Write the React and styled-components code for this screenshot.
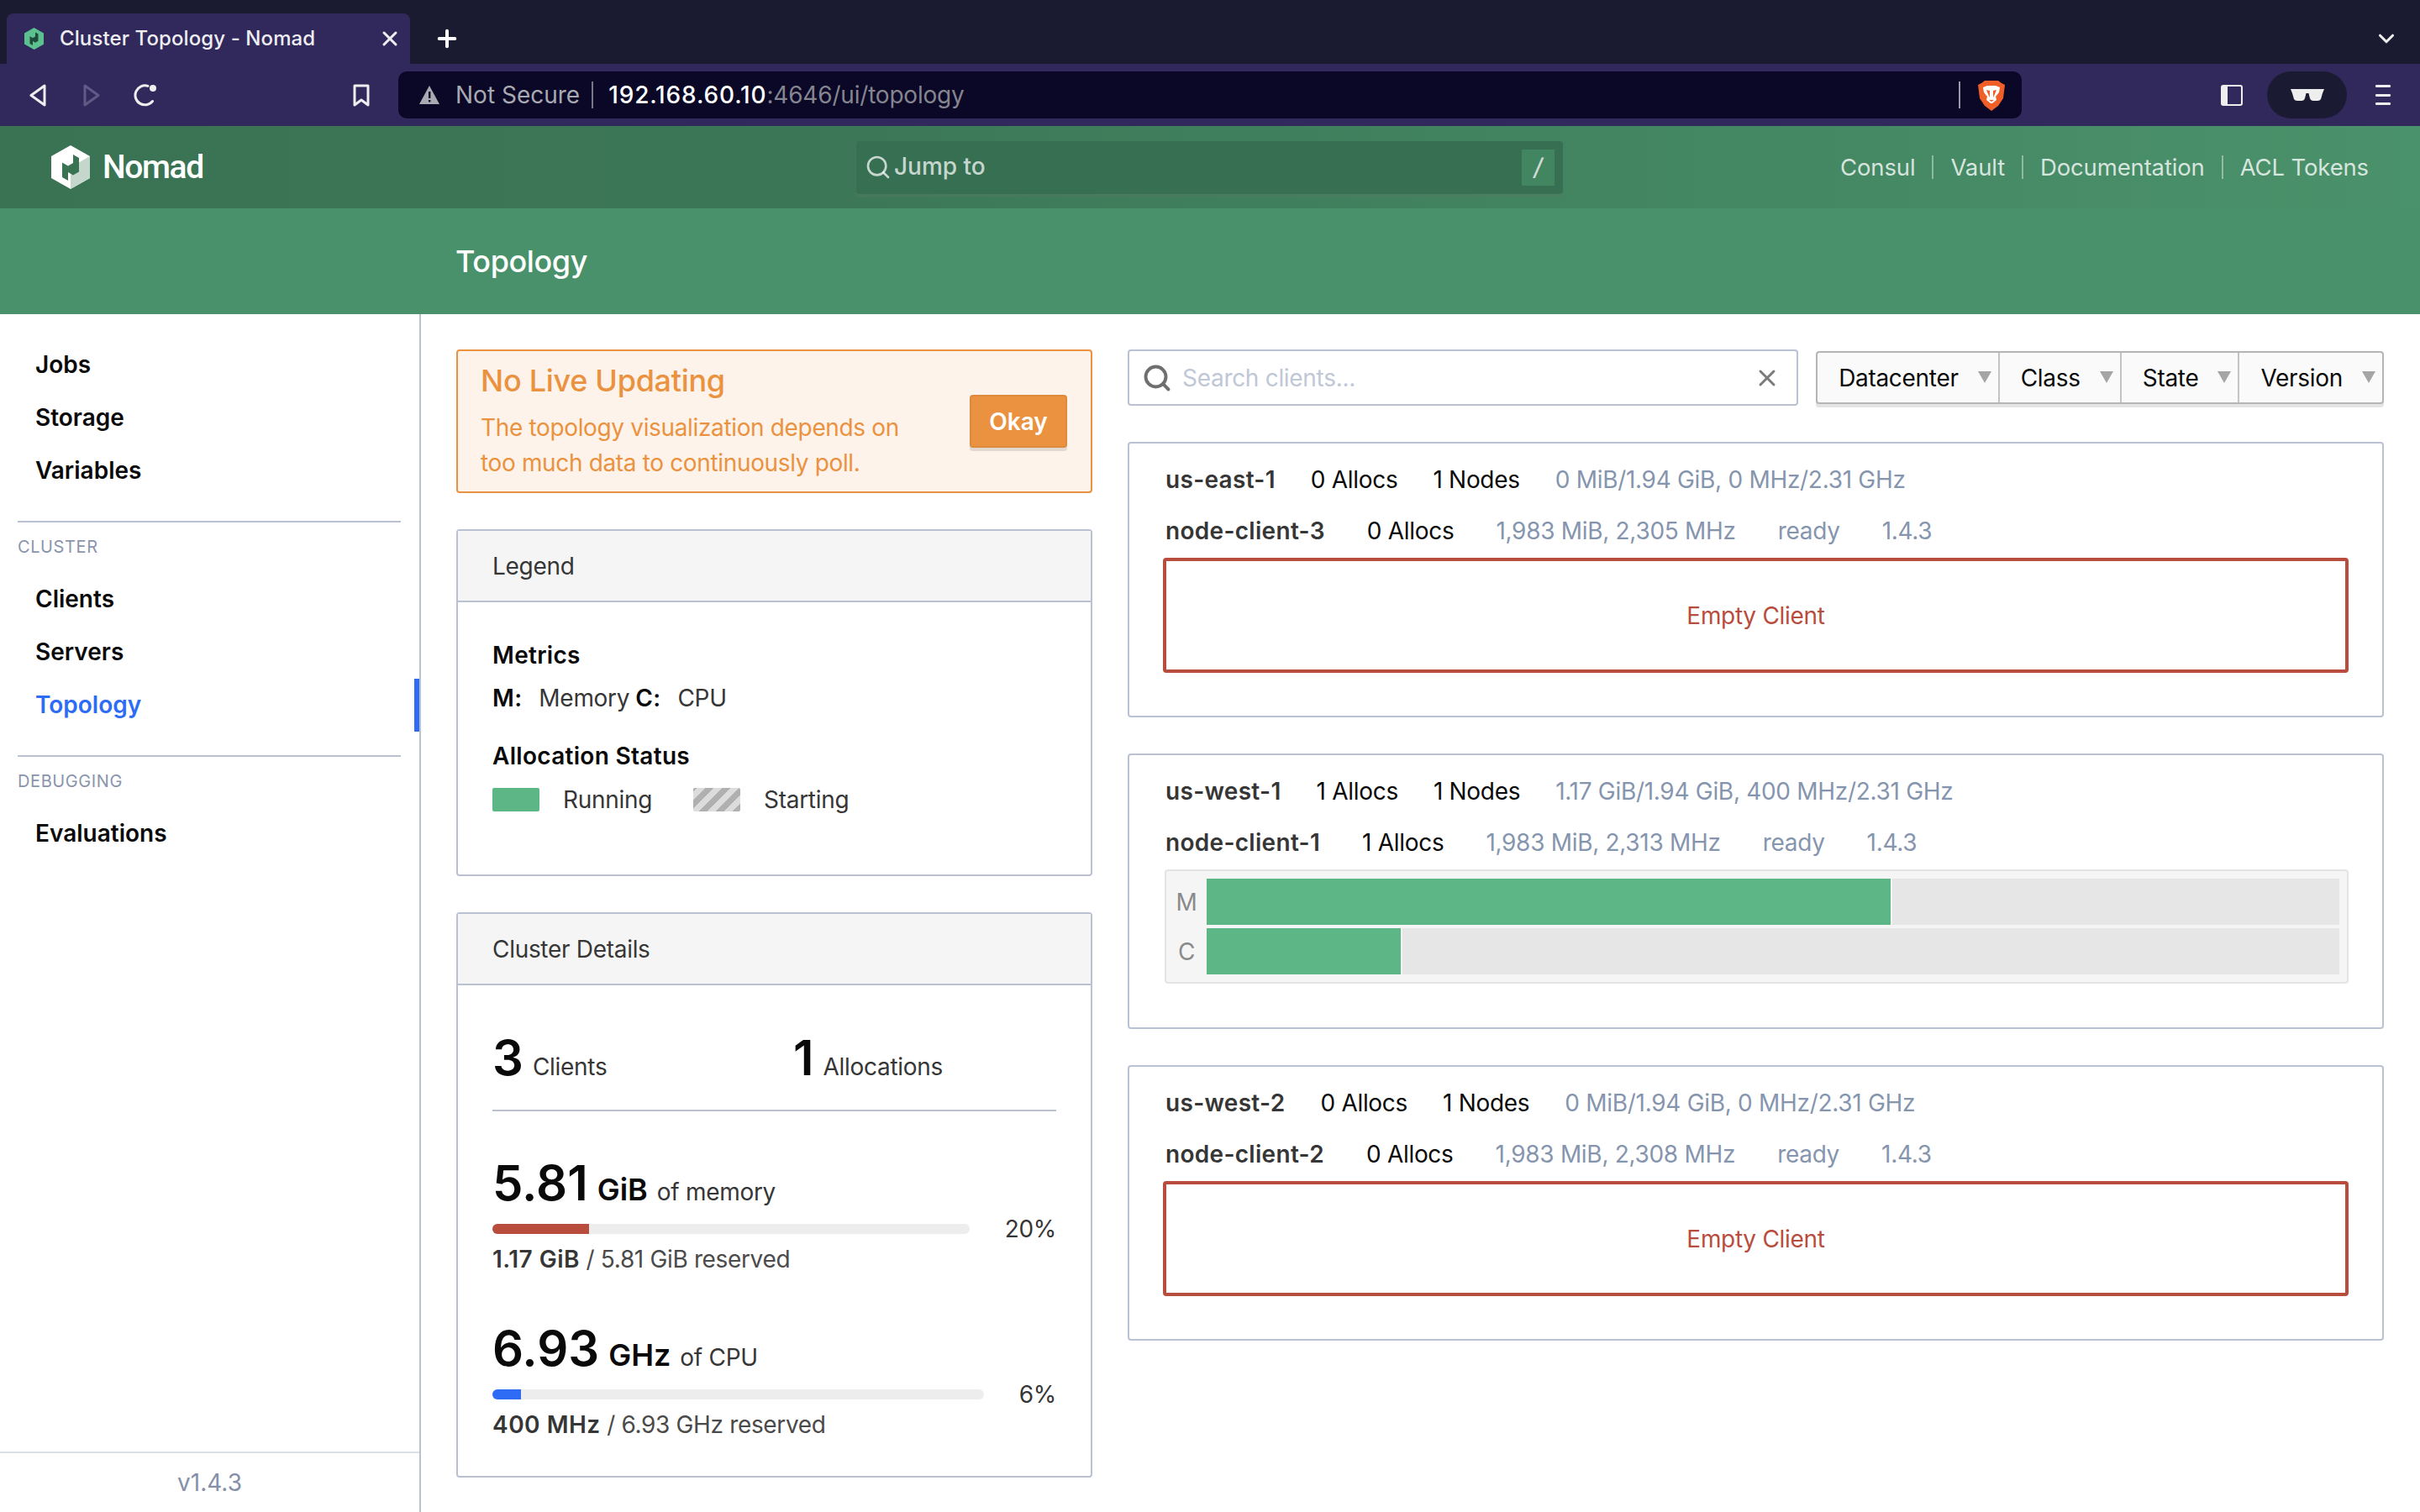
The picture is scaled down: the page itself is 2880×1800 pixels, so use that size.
import React from 'react'
import styled, { createGlobalStyle } from 'styled-components'
import { Search, X, Plus, ChevronDown } from 'lucide-react'

const Global = createGlobalStyle`
html, body { margin: 0; padding: 0; background: #fff; }
body { font-family: Inter, "Liberation Sans", sans-serif; font-size: 28px; line-height: 42px; color: #0a0a0a; letter-spacing: -0.3px; }
* { box-sizing: border-box; }
`

const Page = styled.div`
	width: 2880px;
	height: 1800px;
	overflow: hidden;
	display: flex;
	flex-direction: column;
`

/* browser chrome */
const TabStrip = styled.div`
	height: 76px;
	background: #1a1a30;
	display: flex;
	align-items: flex-end;
	padding: 0 25px 0 8px;
`
const Tab = styled.div`
	width: 480px;
	height: 60px;
	background: #31295c;
	border-radius: 8px 8px 0 0;
	display: flex;
	align-items: center;
	padding: 0 10px 0 21px;
	color: #eeeef2;
	font-size: 24px;
	font-weight: 500;
	letter-spacing: 0.1px;
`
const TabTitle = styled.span`
	margin-left: 19px;
	flex: 1;
`
const NewTab = styled.div`
	margin-left: 28px;
	height: 60px;
	display: flex;
	align-items: center;
	color: #fff;
`
const TabMenu = styled.div`
	margin-left: auto;
	height: 60px;
	display: flex;
	align-items: center;
	color: #eee;
`
const Toolbar = styled.div`
	height: 74px;
	background: #31295c;
	display: flex;
	align-items: center;
`
const NavButtons = styled.div`
	width: 474px;
	display: flex;
	align-items: center;
	padding: 0 34px 0 35px;
`
const NavIcon = styled.div`
	display: flex;
	margin-left: ${p => p.$left || 0}px;
`
const BookmarkSlot = styled.div`
	margin-left: auto;
	display: flex;
`
const UrlBar = styled.div`
	width: 1932px;
	height: 56px;
	background: #0a0727;
	border-radius: 10px;
	display: flex;
	align-items: center;
	padding: 0 20px 0 24px;
	font-size: 28px;
	color: #fff;
	letter-spacing: 0;
`
const NotSecure = styled.span`
	color: #a9a9b2;
	margin-left: 18px;
	padding-right: 14px;
	border-right: 2px solid #77778a;
	line-height: 32px;
`
const Host = styled.span`
	margin-left: 18px;
	font-weight: 500;
	letter-spacing: 0.85px;
`
const UrlRest = styled.span`
	color: #85858f;
	letter-spacing: -0.2px;
`
const UrlEnd = styled.div`
	margin-left: auto;
	display: flex;
	align-items: center;
	gap: 21px;
`
const UrlDivider = styled.div`
	width: 2px;
	height: 32px;
	background: #9a9aa6;
`
const ToolbarRight = styled.div`
	flex: 1;
	display: flex;
	align-items: center;
	padding-left: 237px;
`
const ShieldPill = styled.div`
	margin-left: 29px;
	width: 95px;
	height: 56px;
	border-radius: 28px;
	background: #1b1a33;
	display: flex;
	align-items: center;
	justify-content: center;
`
const MenuBars = styled.div`
	margin-left: 34px;
	width: 18px;
	height: 24px;
	display: flex;
	flex-direction: column;
	justify-content: space-between;
`
const MenuBar = styled.div`
	height: 3px;
	border-radius: 1px;
	background: #eee;
`

/* nomad header */
const Navbar = styled.div`
	height: 98px;
	background: linear-gradient(90deg, #3a7353 0%, #3b7656 30%, #4a926b 100%);
	display: grid;
	grid-template-columns: 1019px 841px 1fr;
	align-items: center;
`
const Brand = styled.div`
	display: flex;
	align-items: center;
	padding-left: 61px;
	gap: 15px;
`
const BrandName = styled.span`
	font-family: Roboto, "Liberation Sans", sans-serif;
	font-size: 39px;
	font-weight: 500;
	color: #fff;
	line-height: 52px;
	letter-spacing: -1.4px;
`
const JumpTo = styled.div`
	height: 63px;
	background: #376f52;
	border-radius: 4px;
	box-shadow: 0 4px 0 rgba(90, 120, 100, 0.35);
	display: flex;
	align-items: center;
	padding: 0 10px 0 10px;
	color: rgba(255, 255, 255, 0.72);
	font-weight: 500;
	letter-spacing: 0;
`
const JumpText = styled.span`
	margin-left: 3px;
	flex: 1;
	line-height: 40px;
	padding-bottom: 2px;
`
const KeyHint = styled.div`
	width: 39px;
	height: 43px;
	background: #418660;
	display: flex;
	align-items: center;
	justify-content: center;
	font-style: italic;
	color: #cfdcd4;
`
const NavLinks = styled.div`
	display: flex;
	justify-content: flex-end;
	padding-right: 61px;
`
const NavLink = styled.a`
	font-size: 27.5px;
	letter-spacing: -0.15px;
	color: rgba(255, 255, 255, 0.78);
	line-height: 28px;
	padding: 0 20px;
	border-left: 2px solid rgba(255, 255, 255, 0.4);
	&:first-child { border-left: 0; }
	&:last-child { padding-right: 0; }
`
const SubHeader = styled.div`
	height: 126px;
	background: #48916a;
	display: flex;
	align-items: center;
	padding-left: 542px;
	color: #fff;
	font-size: 36px;
	font-weight: 500;
	letter-spacing: -0.4px;
`

/* main */
const Main = styled.div`
	flex: 1;
	display: flex;
	min-height: 0;
`
const Sidebar = styled.aside`
	width: 501px;
	flex: none;
	border-right: 2px solid #b9c1d3;
	display: flex;
	flex-direction: column;
	padding-top: 29px;
`
const NavGroup = styled.div`
	display: flex;
	flex-direction: column;
`
const NavItem = styled.a`
	position: relative;
	height: 63px;
	line-height: 63px;
	padding-left: 42px;
	font-weight: 600;
	font-size: 28px;
	letter-spacing: 0;
	color: ${p => (p.$active ? '#2e6cf6' : '#0a0a0a')};
	${p => p.$active && `
	&::after {
		content: '';
		position: absolute;
		right: 0;
		top: 0;
		bottom: 0;
		width: 6px;
		background: #2e6cf6;
	}`}
`
const NavDivider = styled.div`
	height: 2px;
	margin: 28px 22px 0 21px;
	background: #b9c1d3;
`
const NavLabel = styled.div`
	font-size: 20px;
	line-height: 24px;
	letter-spacing: 0.6px;
	color: #8a95ad;
	padding: 17px 0 19px 21px;
`
const Version = styled.div`
	margin-top: auto;
	height: 72px;
	border-top: 2px solid #dbdfe6;
	display: flex;
	align-items: center;
	justify-content: center;
	color: #8590a8;
	letter-spacing: 0;
`
const Content = styled.div`
	flex: 1;
	display: flex;
	gap: 42px;
	padding: 42px 43px 0 42px;
	min-width: 0;
`
const LeftCol = styled.div`
	width: 757px;
	flex: none;
	display: flex;
	flex-direction: column;
	gap: 43px;
`
const RightCol = styled.div`
	flex: 1;
	display: flex;
	flex-direction: column;
	gap: 43px;
	min-width: 0;
`
const Alert = styled.div`
	height: 171px;
	background: #fdf3ea;
	border: 2px solid #ea9240;
	border-radius: 4px;
	display: flex;
	align-items: center;
	justify-content: space-between;
	padding: 0 28px 0 27px;
	color: #ea9240;
`
const AlertText = styled.div`
	margin-top: -3px;
`
const AlertTitle = styled.div`
	font-size: 36px;
	font-weight: 500;
	line-height: 50px;
	letter-spacing: -0.3px;
`
const AlertBody = styled.div`
	margin-top: 10px;
	letter-spacing: -0.35px;
`
const OkayButton = styled.button`
	width: 116px;
	height: 63px;
	border: 2px solid #de8a3c;
	border-radius: 4px;
	background: #ea9240;
	color: #fff;
	font: 600 28px Inter, sans-serif;
	box-shadow: 0 4px 0 #e3d8cd;
`
const Card = styled.section`
	border: 2px solid #b9c1d3;
	border-radius: 4px;
`
const CardHeader = styled.div`
	height: 85px;
	background: #f5f5f5;
	border-bottom: 2px solid #b9c1d3;
	display: flex;
	align-items: center;
	padding-left: 41px;
	color: #363636;
`
const LegendBody = styled.div`
	padding: 42px 41px 68px;
`
const LegendTitle = styled.div`
	font-weight: 600;
	letter-spacing: 0.3px;
	margin-top: ${p => p.$top || 0}px;
`
const LegendRow = styled.div`
	display: flex;
	align-items: center;
	margin-top: ${p => p.$top}px;
`
const Strong = styled.strong`
	font-weight: 600;
	letter-spacing: 0.3px;
`
const LegendValue = styled.span`
	margin: 0 7px 0 20px;
	color: #363636;
`
const Swatch = styled.div`
	width: 56px;
	height: 28px;
	border-radius: 2px;
	background: ${p => (p.$striped
		? 'repeating-linear-gradient(-45deg, #b0b0b0 0 7px, #dcdcdc 7px 14px)'
		: '#5cb686')};
`
const SwatchLabel = styled.span`
	margin: 0 ${p => p.$right || 0}px 0 28px;
	color: #363636;
`
const DetailsBody = styled.div`
	padding: 0 41px 40px;
`
const CountRow = styled.div`
	display: grid;
	grid-template-columns: 358px 1fr;
	padding: 54px 0 30px;
	border-bottom: 2px solid #b9c1d3;
`
const Count = styled.div`
	display: flex;
	align-items: baseline;
	gap: 11px;
	color: #363636;
`
const BigNumber = styled.span`
	font-size: 58px;
	line-height: 64px;
	font-weight: 600;
	letter-spacing: 0;
	color: #0a0a0a;
`
const Metric = styled.div`
	margin-top: 53px;
	display: flex;
	align-items: baseline;
	gap: 11px;
	color: #363636;
`
const Unit = styled.span`
	font-size: 36px;
	font-weight: 600;
	letter-spacing: 0;
	color: #0a0a0a;
`
const BarRow = styled.div`
	margin-top: 11px;
	height: 24px;
	display: flex;
	align-items: center;
	gap: 42px;
	color: #363636;
`
const Track = styled.div`
	flex: 1;
	height: 12px;
	border-radius: 6px;
	overflow: hidden;
	background: #ededed;
`
const Fill = styled.div`
	height: 100%;
	width: ${p => p.$pct}%;
	background: ${p => p.$color};
`
const Caption = styled.div`
	margin-top: 3px;
	color: #4a4a4a;
	letter-spacing: -0.35px;
	strong { font-weight: 600; color: #363636; letter-spacing: 0.5px; }
`

/* clients */
const Filters = styled.div`
	display: flex;
	align-items: center;
	gap: 21px;
`
const SearchBox = styled.div`
	flex: 1;
	height: 67px;
	border: 2px solid #b9c1d3;
	border-radius: 4px;
	display: flex;
	align-items: center;
	padding: 0 19px 0 15px;
	color: #c0c7d7;
`
const SearchText = styled.span`
	margin-left: 12px;
	flex: 1;
`
const DropdownGroup = styled.div`
	display: flex;
	height: 63px;
	border: 2px solid #b5b5b5;
	border-radius: 4px;
	background: #fafafa;
	box-shadow: 0 4px 0 #e4e4e4;
`
const Dropdown = styled.div`
	display: flex;
	align-items: center;
	gap: 23px;
	padding: 0 8px 0 25px;
	color: #0a0a0a;
	border-left: 2px solid #c4c4c4;
	&:first-child { border-left: 0; }
`
const Caret = styled.div`
	width: 0;
	height: 0;
	margin-top: -2px;
	border-left: 8px solid transparent;
	border-right: 8px solid transparent;
	border-top: 14px solid #a5a5a5;
`
const Datacenter = styled.div`
	height: 328px;
	border: 2px solid #b9c1d3;
	border-radius: 4px;
	padding: 22px 40px 0 43px;
`
const StatRow = styled.div`
	display: flex;
	gap: ${p => p.$gap}px;
	margin-bottom: ${p => p.$bottom}px;
	white-space: nowrap;
	color: #0a0a0a;
`
const StatName = styled.span`
	font-weight: 600;
	letter-spacing: 0.3px;
	color: #363636;
`
const StatMuted = styled.span`
	color: #8695ae;
`
const EmptyClient = styled.div`
	height: 137px;
	margin-left: -3px;
	border: 4px solid #b84c3d;
	border-radius: 4px;
	display: flex;
	align-items: center;
	justify-content: center;
	color: #b84c3d;
`
const NodeBars = styled.div`
	height: 136px;
	margin-left: -1px;
	padding: 9px 9px 9px 0;
	background: #f5f5f5;
	border: 2px solid #e4e4e4;
	border-radius: 4px;
	display: flex;
	flex-direction: column;
	gap: 4px;
`
const NodeBarRow = styled.div`
	flex: 1;
	display: flex;
	align-items: center;
`
const NodeBarLabel = styled.div`
	width: 48px;
	text-align: center;
	color: #8a8a8a;
`
const NodeTrack = styled.div`
	flex: 1;
	height: 55px;
	background: #e6e6e6;
`
const NodeFill = styled.div`
	height: 100%;
	width: ${p => p.$pct}%;
	background: #5cb686;
	border-right: 2px solid #f5f5f5;
`

/* drawings */
const NomadMark = ({ size, body, side, glyph }) => (
	<svg width={size * 46 / 52} height={size} viewBox="0 0 46 52">
		<polygon points="23,0 46,13 46,39 23,52 0,39 0,13" fill={body} />
		<polygon points="23,26 46,13 46,39 23,52" fill={side} />
		<path d="M13 20.5 L20 24.5 L26 21 V11 L33 15 V31.5 L26 35.5 L20 32 V42 L13 38 Z" fill={glyph} />
	</svg>
)
const Arrow = ({ color, d }) => (
	<svg width="20" height="27" viewBox="0 0 20 27" fill="none" stroke={color} strokeWidth="3" strokeLinejoin="round">
		<path d={d} />
	</svg>
)
const Reload = () => (
	<svg width="28" height="28" viewBox="0 0 28 28" fill="none">
		<path d="M22.5 21.5 A11.5 11.5 0 1 1 17 3.4" stroke="#eee" strokeWidth="3" strokeLinecap="round" />
		<circle cx="23" cy="6" r="4" fill="#eee" />
	</svg>
)
const Bookmark = () => (
	<svg width="20" height="27" viewBox="0 0 20 27" fill="none" stroke="#eee" strokeWidth="3" strokeLinejoin="round">
		<path d="M2 2 H18 V25 L10 19 L2 25 Z" />
	</svg>
)
const Warning = () => (
	<svg width="26" height="24" viewBox="0 0 26 24">
		<path d="M13 1 L25 23 H1 Z" fill="#a9a9b2" />
		<rect x="12" y="8" width="2.4" height="8" fill="#0a0727" />
		<rect x="12" y="18" width="2.4" height="2.4" fill="#0a0727" />
	</svg>
)
const Lion = () => (
	<svg width="32" height="37" viewBox="0 0 32 37">
		<path d="M8 1 H24 L28 4 L32 6 L30 22 L24 31 L16 37 L8 31 L2 22 L0 6 L4 4 Z" fill="#ef5f27" />
		<path d="M6 9 L11 7 H21 L26 9 L25 15 L21 20 L22 24 L17 28 H15 L10 24 L11 20 L7 15 Z" fill="#fff" />
		<path d="M10 12 L14 13 L14 21 L12 17 Z M22 12 L18 13 L18 21 L20 17 Z M13 24 H19 L16 26 Z" fill="#ef5f27" />
	</svg>
)
const Panel = () => (
	<svg width="26" height="25" viewBox="0 0 26 25">
		<rect x="1" y="1" width="24" height="23" rx="2" fill="none" stroke="#eee" strokeWidth="2" />
		<rect x="1" y="1" width="7" height="23" fill="#eee" />
	</svg>
)
const Glasses = () => (
	<svg width="40" height="15" viewBox="0 0 40 15">
		<path d="M0 0 H40 L38 5 L36 12 Q35 14 32 14 H27 Q24 14 23 11 L21.5 5 H18.5 L17 11 Q16 14 13 14 H8 Q5 14 4 12 L2 5 Z" fill="#eee" />
	</svg>
)

const regions = [
	{ name: 'us-east-1', allocs: 0, usage: '0 MiB/1.94 GiB, 0 MHz/2.31 GHz', node: 'node-client-3', res: '1,983 MiB, 2,305 MHz' },
	{ name: 'us-west-1', allocs: 1, usage: '1.17 GiB/1.94 GiB, 400 MHz/2.31 GHz', node: 'node-client-1', res: '1,983 MiB, 2,313 MHz' },
	{ name: 'us-west-2', allocs: 0, usage: '0 MiB/1.94 GiB, 0 MHz/2.31 GHz', node: 'node-client-2', res: '1,983 MiB, 2,308 MHz' },
]

const App = () => {
	return (
		<Page>
			<Global />
			<TabStrip>
				<Tab>
					<NomadMark size={26} body="#5cc08f" side="#5cc08f" glyph="#1f4a3c" />
					<TabTitle>Cluster Topology - Nomad</TabTitle>
					<X size={28} strokeWidth={2.6} />
				</Tab>
				<NewTab><Plus size={32} strokeWidth={3} /></NewTab>
				<TabMenu><ChevronDown size={30} strokeWidth={2.5} /></TabMenu>
			</TabStrip>
			<Toolbar>
				<NavButtons>
					<NavIcon><Arrow color="#eee" d="M18 2 L2 13.5 L18 25 Z" /></NavIcon>
					<NavIcon $left={44}><Arrow color="#625a85" d="M2 2 L18 13.5 L2 25 Z" /></NavIcon>
					<NavIcon $left={40}><Reload /></NavIcon>
					<BookmarkSlot><Bookmark /></BookmarkSlot>
				</NavButtons>
				<UrlBar>
					<Warning />
					<NotSecure>Not Secure</NotSecure>
					<Host>192.168.60.10</Host>
					<UrlRest>:4646/ui/topology</UrlRest>
					<UrlEnd>
						<UrlDivider />
						<Lion />
					</UrlEnd>
				</UrlBar>
				<ToolbarRight>
					<Panel />
					<ShieldPill><Glasses /></ShieldPill>
					<MenuBars><MenuBar /><MenuBar /><MenuBar /></MenuBars>
				</ToolbarRight>
			</Toolbar>
			<Navbar>
				<Brand>
					<NomadMark size={52} body="#fff" side="#c5d6cc" glyph="#3a7353" />
					<BrandName>Nomad</BrandName>
				</Brand>
				<JumpTo>
					<Search size={32} strokeWidth={2} />
					<JumpText>Jump to</JumpText>
					<KeyHint>/</KeyHint>
				</JumpTo>
				<NavLinks>
					<NavLink>Consul</NavLink>
					<NavLink>Vault</NavLink>
					<NavLink>Documentation</NavLink>
					<NavLink>ACL Tokens</NavLink>
				</NavLinks>
			</Navbar>
			<SubHeader>Topology</SubHeader>
			<Main>
				<Sidebar>
					<NavGroup>
						<NavItem>Jobs</NavItem>
						<NavItem>Storage</NavItem>
						<NavItem>Variables</NavItem>
					</NavGroup>
					<NavDivider />
					<NavLabel>CLUSTER</NavLabel>
					<NavGroup>
						<NavItem>Clients</NavItem>
						<NavItem>Servers</NavItem>
						<NavItem $active>Topology</NavItem>
					</NavGroup>
					<NavDivider />
					<NavLabel>DEBUGGING</NavLabel>
					<NavGroup>
						<NavItem>Evaluations</NavItem>
					</NavGroup>
					<Version>v1.4.3</Version>
				</Sidebar>
				<Content>
					<LeftCol>
						<Alert>
							<AlertText>
								<AlertTitle>No Live Updating</AlertTitle>
								<AlertBody>The topology visualization depends on<br />too much data to continuously poll.</AlertBody>
							</AlertText>
							<OkayButton>Okay</OkayButton>
						</Alert>
						<Card>
							<CardHeader>Legend</CardHeader>
							<LegendBody>
								<LegendTitle>Metrics</LegendTitle>
								<LegendRow $top={9}>
									<Strong>M:</Strong><LegendValue>Memory</LegendValue>
									<Strong>C:</Strong><LegendValue>CPU</LegendValue>
								</LegendRow>
								<LegendTitle $top={27}>Allocation Status</LegendTitle>
								<LegendRow $top={10}>
									<Swatch /><SwatchLabel $right={49}>Running</SwatchLabel>
									<Swatch $striped /><SwatchLabel>Starting</SwatchLabel>
								</LegendRow>
							</LegendBody>
						</Card>
						<Card>
							<CardHeader>Cluster Details</CardHeader>
							<DetailsBody>
								<CountRow>
									<Count><BigNumber>3</BigNumber>Clients</Count>
									<Count><BigNumber>1</BigNumber>Allocations</Count>
								</CountRow>
								<Metric><BigNumber>5.81</BigNumber><Unit>GiB</Unit>of memory</Metric>
								<BarRow><Track><Fill $pct={20.2} $color="#b84c3d" /></Track>20%</BarRow>
								<Caption><strong>1.17 GiB</strong> / 5.81 GiB reserved</Caption>
								<Metric><BigNumber>6.93</BigNumber><Unit>GHz</Unit>of CPU</Metric>
								<BarRow><Track><Fill $pct={5.8} $color="#2e6cf6" /></Track>6%</BarRow>
								<Caption><strong>400 MHz</strong> / 6.93 GHz reserved</Caption>
							</DetailsBody>
						</Card>
					</LeftCol>
					<RightCol>
						<Filters>
							<SearchBox>
								<Search size={36} color="#6f6f6f" strokeWidth={2.6} />
								<SearchText>Search clients...</SearchText>
								<X size={32} color="#7a7a7a" strokeWidth={2.2} />
							</SearchBox>
							<DropdownGroup>
								{['Datacenter', 'Class', 'State', 'Version'].map(d => (
									<Dropdown key={d}>{d}<Caret /></Dropdown>
								))}
							</DropdownGroup>
						</Filters>
						{regions.map(r => (
							<Datacenter key={r.name}>
								<StatRow $gap={42} $bottom={19}>
									<StatName>{r.name}</StatName>
									<span>{r.allocs} Allocs</span>
									<span>1 Nodes</span>
									<StatMuted>{r.usage}</StatMuted>
								</StatRow>
								<StatRow $gap={50} $bottom={11}>
									<StatName>{r.node}</StatName>
									<span>{r.allocs} Allocs</span>
									<StatMuted>{r.res}</StatMuted>
									<StatMuted>ready</StatMuted>
									<StatMuted>1.4.3</StatMuted>
								</StatRow>
								{r.allocs === 0 ? (
									<EmptyClient>Empty Client</EmptyClient>
								) : (
									<NodeBars>
										<NodeBarRow><NodeBarLabel>M</NodeBarLabel><NodeTrack><NodeFill $pct={60.5} /></NodeTrack></NodeBarRow>
										<NodeBarRow><NodeBarLabel>C</NodeBarLabel><NodeTrack><NodeFill $pct={17.3} /></NodeTrack></NodeBarRow>
									</NodeBars>
								)}
							</Datacenter>
						))}
					</RightCol>
				</Content>
			</Main>
		</Page>
	)
}

export default App
